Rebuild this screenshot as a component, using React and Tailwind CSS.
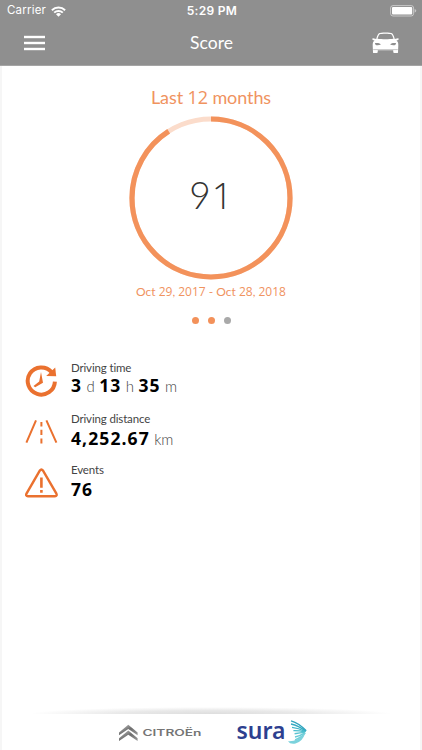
import React from 'react';

const MenuIcon = () => (
    <svg width="22" height="16" viewBox="0 0 22 16" fill="#fff">
        <rect x="0" y="0.8" width="21" height="2.4" />
        <rect x="0" y="6.8" width="21" height="2.4" />
        <rect x="0" y="12.8" width="21" height="2.4" />
    </svg>
);

const WifiIcon = () => (
    <svg width="15" height="11" viewBox="0 0 15 11" fill="none" stroke="#fff" strokeWidth="1.9">
        <path d="M0.9 4.2 A9.4 9.4 0 0 1 14.1 4.2" />
        <path d="M3.2 6.7 A6.1 6.1 0 0 1 11.8 6.7" />
        <path d="M7.5 10.7 L5 8.3 A3.5 3.5 0 0 1 10 8.3 Z" fill="#fff" stroke="none" />
    </svg>
);

const BatteryIcon = () => (
    <svg width="27" height="12" viewBox="0 0 27 12">
        <rect x="0.6" y="0.6" width="23" height="10.4" rx="2.4" fill="none" stroke="#fff" strokeOpacity="0.5" />
        <rect x="2" y="2" width="20.2" height="7.6" rx="1" fill="#fff" />
        <path d="M24.6 3.9 Q26.3 4.6 26.3 5.8 Q26.3 7 24.6 7.7 Z" fill="#fff" fillOpacity="0.5" />
    </svg>
);

const CarIcon = () => (
    <svg width="27" height="22" viewBox="0 0 27 22">
        <path
            fill="#fff"
            d="M4.2 6.9 C5 4.2 5.7 2.3 6.9 1.2 C8.3 0.3 18.7 0.3 20.1 1.2 C21.3 2.3 22 4.2 22.8 6.9 L26 6.2 C27 6.5 27 7.7 25.6 8.2 L24.5 8.5 C26 9.8 26.4 11.2 26.3 13.5 L26 20.4 Q26 21 25.2 21 L22.3 21 Q21.3 21 21.3 20.2 L21.2 18.3 L5.8 18.3 L5.7 20.2 Q5.7 21 4.7 21 L1.8 21 Q1 21 1 20.4 L0.7 13.5 C0.6 11.2 1 9.8 2.5 8.5 L1.4 8.2 C0 7.7 0 6.5 1 6.2 Z"
        />
        <path fill="#8f8f8f" d="M5.5 6.8 C6.2 4.5 6.8 2.9 7.6 2.2 C9.5 1.5 17.5 1.5 19.4 2.2 C20.2 2.9 20.8 4.5 21.5 6.8 C17 7.4 10 7.4 5.5 6.8 Z" />
        <path fill="#8f8f8f" d="M2.9 11 L6.3 11 Q8.6 11.5 8.8 12.8 Q5 13.8 3.5 12.7 Z M24.1 11 L20.7 11 Q18.4 11.5 18.2 12.8 Q22 13.8 23.5 12.7 Z" />
        <path d="M1.2 17.6 L25.8 17.6" stroke="#8f8f8f" strokeWidth="0.5" />
    </svg>
);

const ClockIcon = () => (
    <svg width="34" height="34" viewBox="0 0 34 34">
        <path d="M27.6 8.1 A13.6 13.6 0 1 0 30.9 17.6" fill="none" stroke="#ea712f" strokeWidth="4" />
        <path d="M31.2 3.6 L32.2 12.2 L22.2 12 Z" fill="#ea712f" />
        <path d="M17 8 L19 18.8 L11.2 23.2 L9.5 22 L15.2 17.6 Z" fill="#ea712f" />
    </svg>
);

const RoadIcon = () => (
    <svg width="34" height="34" viewBox="0 0 34 34" fill="none" stroke="#ea712f" strokeWidth="2">
        <path d="M12 5.3 L2.4 27.6 M22.4 5.3 L32.4 27.6" />
        <path d="M17.4 7 V11.4 M17.4 14.8 V20 M17.4 23.6 V28.4" />
    </svg>
);

const WarningIcon = () => (
    <svg width="34" height="34" viewBox="0 0 34 34" fill="none" stroke="#ea712f">
        <path d="M15.9 4.5 Q17.4 2.4 18.9 4.5 L32.4 27.6 Q33.4 30.1 30.9 30.3 L4 30.3 Q1.4 30.1 2.5 27.6 Z" strokeWidth="2.4" />
        <path d="M17.4 11.6 V21.8 M17.4 24 V26.8" strokeWidth="2.6" />
    </svg>
);

const ScoreRing = ({ score }) => (
    <svg width="164" height="164" viewBox="0 0 164 164" className="col-start-1 row-start-1">
        <g fill="none" strokeWidth="5.2" transform="rotate(-90 82 82)">
            <circle cx="82" cy="82" r="79" stroke="#fbdccb" />
            <circle cx="82" cy="82" r="79" stroke="#f3925b" pathLength="100" strokeDasharray={`${score} 100`} />
        </g>
    </svg>
);

const CitroenLogo = () => (
    <svg width="84" height="18" viewBox="0 0 84 18">
        <defs>
            <linearGradient id="chrome" x1="0" y1="0" x2="1" y2="1">
                <stop offset="0" stopColor="#c8c8c8" />
                <stop offset="0.5" stopColor="#6e6e6e" />
                <stop offset="1" stopColor="#9a9a9a" />
            </linearGradient>
        </defs>
        <path d="M1 8.6 L10.3 0.8 L19.6 8.6 V11.2 L10.3 5 L1 11.2 Z" fill="url(#chrome)" />
        <path d="M1 14.3 L10.3 6.5 L19.6 14.3 V17 L10.3 10.8 L1 17 Z" fill="url(#chrome)" />
        <text x="24.5" y="12" textLength="59" lengthAdjust="spacingAndGlyphs" fontFamily="Inter, sans-serif" fontWeight="600" fontSize="8.8" fill="#757575">
            CITROËn
        </text>
    </svg>
);

const SuraLogo = () => (
    <svg width="72" height="28" viewBox="0 0 72 28" className="overflow-visible">
        <text x="0.5" y="18.8" textLength="49" lengthAdjust="spacingAndGlyphs" fontFamily="'Noto Sans', sans-serif" fontWeight="600" fontSize="24" fill="#2d3f8f">
            sura
        </text>
        <g fill="none" strokeWidth="1.4">
            <path stroke="#2fa3bd" d="M55 0.8 Q63 3 70.2 10.8" />
            <path stroke="#35abc2" d="M55 4 Q62.5 5.6 69.8 11.2" />
            <path stroke="#3db6c8" d="M56 7.4 Q62.5 8 69.5 11.6" />
            <path stroke="#4abdcd" d="M57.4 10.6 Q63 10.4 69.2 12" />
            <path stroke="#58c3d1" d="M58.6 13.8 Q64 12.8 69 12.4" />
            <path stroke="#66cad6" d="M59 17 Q64.5 15.6 69 12.8" />
            <path stroke="#74d0da" d="M59 19.8 Q65.5 17.6 69.2 13" />
        </g>
        <path d="M52 21.2 Q61 22 69 13.8 Q66.5 21.6 59.5 23.6 Q54 24.6 52 21.2 Z" fill="#7bd2dc" />
    </svg>
);

// Figures use a face whose "1" has no foot
const Num = ({ children }) => <span className="font-['Open_Sans',sans-serif]">{children}</span>;

const stats = [
    {
        icon: ClockIcon,
        label: 'Driving time',
        parts: [['3', 'd'], ['13', 'h'], ['35', 'm']],
        offset: '-mt-px',
    },
    { icon: RoadIcon, label: 'Driving distance', parts: [['4,252.67', 'km']], offset: 'mt-px' },
    { icon: WarningIcon, label: 'Events', parts: [['76', '']], offset: 'mt-px' },
];

const App = () => {
    return (
        <div className="flex h-[750px] w-[422px] flex-col overflow-hidden bg-white font-['Lato',sans-serif]">
            {/* Status bar + title bar */}
            <header className="h-[66px] shrink-0 border-b border-[#a5a5a5] bg-[#8f8f8f] text-white">
                <div className="grid h-[22px] grid-cols-3 items-center pl-[7px] pr-[5px] font-['Inter',sans-serif] text-[11.5px]">
                    <div className="flex items-center gap-[5px]">
                        <span className="tracking-[0.2px]">Carrier</span>
                        <WifiIcon />
                    </div>
                    <span className="text-center text-[12px] font-semibold tracking-[0.3px]">5:29 PM</span>
                    <div className="flex justify-end">
                        <BatteryIcon />
                    </div>
                </div>
                <div className="grid h-[42px] grid-cols-3 items-center pl-6 pr-[23px]">
                    <MenuIcon />
                    <h1 className="text-center text-[17.5px] leading-5">Score</h1>
                    <div className="flex justify-end">
                        <CarIcon />
                    </div>
                </div>
            </header>

            <main className="flex flex-1 flex-col border-x-2 border-[#f6f6f6]">
                {/* Score */}
                <section className="flex shrink-0 flex-col items-center text-[#f0935f]">
                    <h2 className="mt-[19px] text-[18px] leading-6 tracking-[-0.1px]">
                        Last <Num>12</Num> months
                    </h2>
                    <div className="mt-[7px] grid place-items-center">
                        <ScoreRing score={91} />
                        <div className="col-start-1 row-start-1 flex items-baseline gap-px pb-[7px] text-[37px] font-light text-[#333]">
                            <span>9</span>
                            <Num>1</Num>
                        </div>
                    </div>
                    <p className="mt-1 text-[12px] leading-4">
                        Oct <Num>29</Num>, <Num>2017</Num> - Oct <Num>28</Num>, <Num>2018</Num>
                    </p>
                    <div className="mt-[17px] flex gap-[9px]">
                        <span className="h-[7px] w-[7px] rounded-full bg-[#f3915a]" />
                        <span className="h-[7px] w-[7px] rounded-full bg-[#f3915a]" />
                        <span className="h-[7px] w-[7px] rounded-full bg-[#a9a9a9]" />
                    </div>
                </section>

                {/* Driving stats */}
                <section className="mt-9 flex shrink-0 flex-col pl-[22px]">
                    {stats.map(({ icon: Icon, label, parts, offset }) => (
                        <div key={label} className="flex h-[51px] gap-[13px]">
                            <div className="pt-1">
                                <Icon />
                            </div>
                            <div>
                                <div className="text-[11.5px] leading-4 tracking-[-0.15px] text-[#444]">{label}</div>
                                <div className={`${offset} flex items-baseline gap-[4.4px] leading-5`}>
                                    {parts.map(([value, unit]) => (
                                        <React.Fragment key={unit}>
                                            <span className="font-['Open_Sans',sans-serif] text-[17.5px] font-bold tracking-[1.1px] text-black">{value}</span>
                                            <span className="text-[15px] font-light text-[#444]">{unit}</span>
                                        </React.Fragment>
                                    ))}
                                </div>
                            </div>
                        </div>
                    ))}
                </section>

                {/* Partner logos */}
                <footer className="mt-auto shrink-0">
                    <div className="mx-7 h-[7px] bg-[radial-gradient(ellipse_50%_100%_at_50%_100%,#dddddd_0%,#e8e8e8_50%,#ffffff_100%)]" />
                    <div className="flex h-9 items-start pl-[116px] pt-[6px]">
                        <div className="pt-[4px]">
                            <CitroenLogo />
                        </div>
                        <div className="ml-[34px]">
                            <SuraLogo />
                        </div>
                    </div>
                </footer>
            </main>
        </div>
    );
};

export default App;
